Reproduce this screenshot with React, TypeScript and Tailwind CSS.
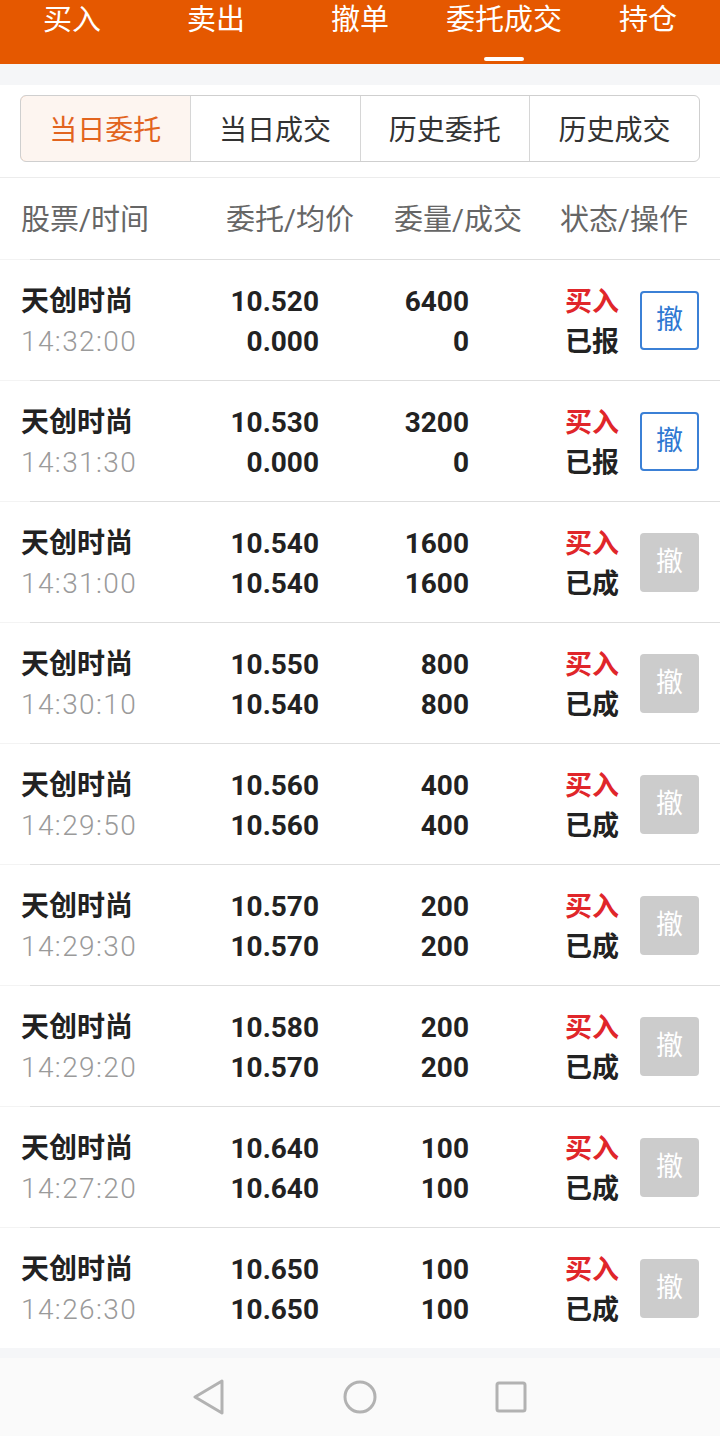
import React from 'react';

type Order = {
	name: string;
	time: string;
	price: string;
	avg: string;
	qty: string;
	deal: string;
	status: string;
	cancelable: boolean;
};

const orders: Order[] = [
	{ name: '天创时尚', time: '14:32:00', price: '10.520', avg: '0.000', qty: '6400', deal: '0', status: '已报', cancelable: true },
	{ name: '天创时尚', time: '14:31:30', price: '10.530', avg: '0.000', qty: '3200', deal: '0', status: '已报', cancelable: true },
	{ name: '天创时尚', time: '14:31:00', price: '10.540', avg: '10.540', qty: '1600', deal: '1600', status: '已成', cancelable: false },
	{ name: '天创时尚', time: '14:30:10', price: '10.550', avg: '10.540', qty: '800', deal: '800', status: '已成', cancelable: false },
	{ name: '天创时尚', time: '14:29:50', price: '10.560', avg: '10.560', qty: '400', deal: '400', status: '已成', cancelable: false },
	{ name: '天创时尚', time: '14:29:30', price: '10.570', avg: '10.570', qty: '200', deal: '200', status: '已成', cancelable: false },
	{ name: '天创时尚', time: '14:29:20', price: '10.580', avg: '10.570', qty: '200', deal: '200', status: '已成', cancelable: false },
	{ name: '天创时尚', time: '14:27:20', price: '10.640', avg: '10.640', qty: '100', deal: '100', status: '已成', cancelable: false },
	{ name: '天创时尚', time: '14:26:30', price: '10.650', avg: '10.650', qty: '100', deal: '100', status: '已成', cancelable: false },
];

const topTabs = ['买入', '卖出', '撤单', '委托成交', '持仓'];
const subTabs = ['当日委托', '当日成交', '历史委托', '历史成交'];

const font = "font-['Roboto','Noto_Sans_CJK_SC',sans-serif]";

function Divider() {
	return (
		<div className="flex h-px">
			<div className="w-[30px] bg-[#f4f4f4]" />
			<div className="flex-1 bg-[#dedede]" />
		</div>
	);
}

export default function App() {
	return (
		<div className={`w-[720px] h-[1436px] flex flex-col bg-white ${font}`}>
			{/* top tabs */}
			<div className="h-16 bg-[#e55800] grid grid-cols-5 shrink-0">
				{topTabs.map((t, i) => (
					<div key={t} className="flex flex-col items-center">
						<div className="h-10 leading-10 text-[29px] text-white">{t}</div>
						{i === 3 && <div className="mt-[17px] w-10 h-1 rounded-full bg-white" />}
					</div>
				))}
			</div>
			<div className="h-[21px] bg-[#f5f6f8] shrink-0" />

			{/* segmented control */}
			<div className="pt-[10px] pb-[15px] px-5 shrink-0">
				<div className="flex h-[67px] border border-[#cfcfcf] rounded-md overflow-hidden">
					{subTabs.map((t, i) => (
						<div
							key={t}
							className={
								i === 0
									? 'flex-1 flex items-center justify-center pt-1 text-[28px] text-[#e2641e] bg-[#fdf5f0] border border-[#d99a72] rounded-l-md -m-px'
									: 'flex-1 flex items-center justify-center pt-1 text-[28px] text-[#333] border-l border-[#d6d6d6]'
							}
						>
							{t}
						</div>
					))}
				</div>
			</div>
			<div className="h-px bg-[#ececec] shrink-0" />

			{/* table header */}
			<div className="h-[81px] flex items-center pt-[5px] px-[21px] text-[29px] text-[#666] shrink-0">
				<div className="w-[150px]">股票/时间</div>
				<div className="w-[183px] text-right">委托/均价</div>
				<div className="w-[168px] text-right">委量/成交</div>
				<div className="w-[166px] text-right">状态/操作</div>
			</div>
			<Divider />

			{/* rows */}
			{orders.map((o, i) => (
				<div key={o.time} className="shrink-0">
					<div className="h-[120px] flex items-center px-[21px]">
						<div className="w-[150px] pt-1">
							<div className="h-10 leading-10 text-[28px] font-bold text-[#222]">{o.name}</div>
							<div className="h-10 leading-10 text-[28px] font-light tracking-[1.4px] text-[#9a9a9a]">{o.time}</div>
						</div>
						<div className="w-[148px] pt-1 text-right text-[28px] font-bold text-[#222]">
							<div className="h-10 leading-10">{o.price}</div>
							<div className="h-10 leading-10">{o.avg}</div>
						</div>
						<div className="w-[150px] pt-1 text-right text-[28px] font-bold text-[#222]">
							<div className="h-10 leading-10">{o.qty}</div>
							<div className="h-10 leading-10">{o.deal}</div>
						</div>
						<div className="w-[150px] pt-1 text-right text-[27px] font-bold">
							<div className="h-10 leading-10 text-[#e0262a]">买入</div>
							<div className="h-10 leading-10 text-[#222]">{o.status}</div>
						</div>
						<div
							className={
								o.cancelable
									? 'ml-[21px] w-[59px] h-[59px] flex items-center justify-center rounded border-2 border-[#3b80d6] text-[27px] text-[#2f78d2]'
									: 'ml-[21px] w-[59px] h-[59px] flex items-center justify-center rounded bg-[#cccccc] text-[27px] text-white'
							}
						>
							撤
						</div>
					</div>
					{i < orders.length - 1 && <Divider />}
				</div>
			))}

			{/* nav bar */}
			<div className="flex-1 flex flex-col bg-[#fafafa]">
				<div className="h-[10px] bg-[#f5f6f8]" />
				<div className="flex-1 flex items-center justify-center gap-[118px]">
					<svg width="32" height="36" viewBox="0 0 32 36">
						<path d="M29 2 L2 18 L29 34 Z" fill="none" stroke="#b2b2b2" strokeWidth="3" strokeLinejoin="round" />
					</svg>
					<svg width="34" height="34" viewBox="0 0 34 34">
						<circle cx="17" cy="17" r="15" fill="none" stroke="#b2b2b2" strokeWidth="3" />
					</svg>
					<svg width="32" height="32" viewBox="0 0 32 32">
						<rect x="2" y="2" width="28" height="28" rx="2" fill="none" stroke="#b2b2b2" strokeWidth="3" />
					</svg>
				</div>
			</div>
		</div>
	);
}
